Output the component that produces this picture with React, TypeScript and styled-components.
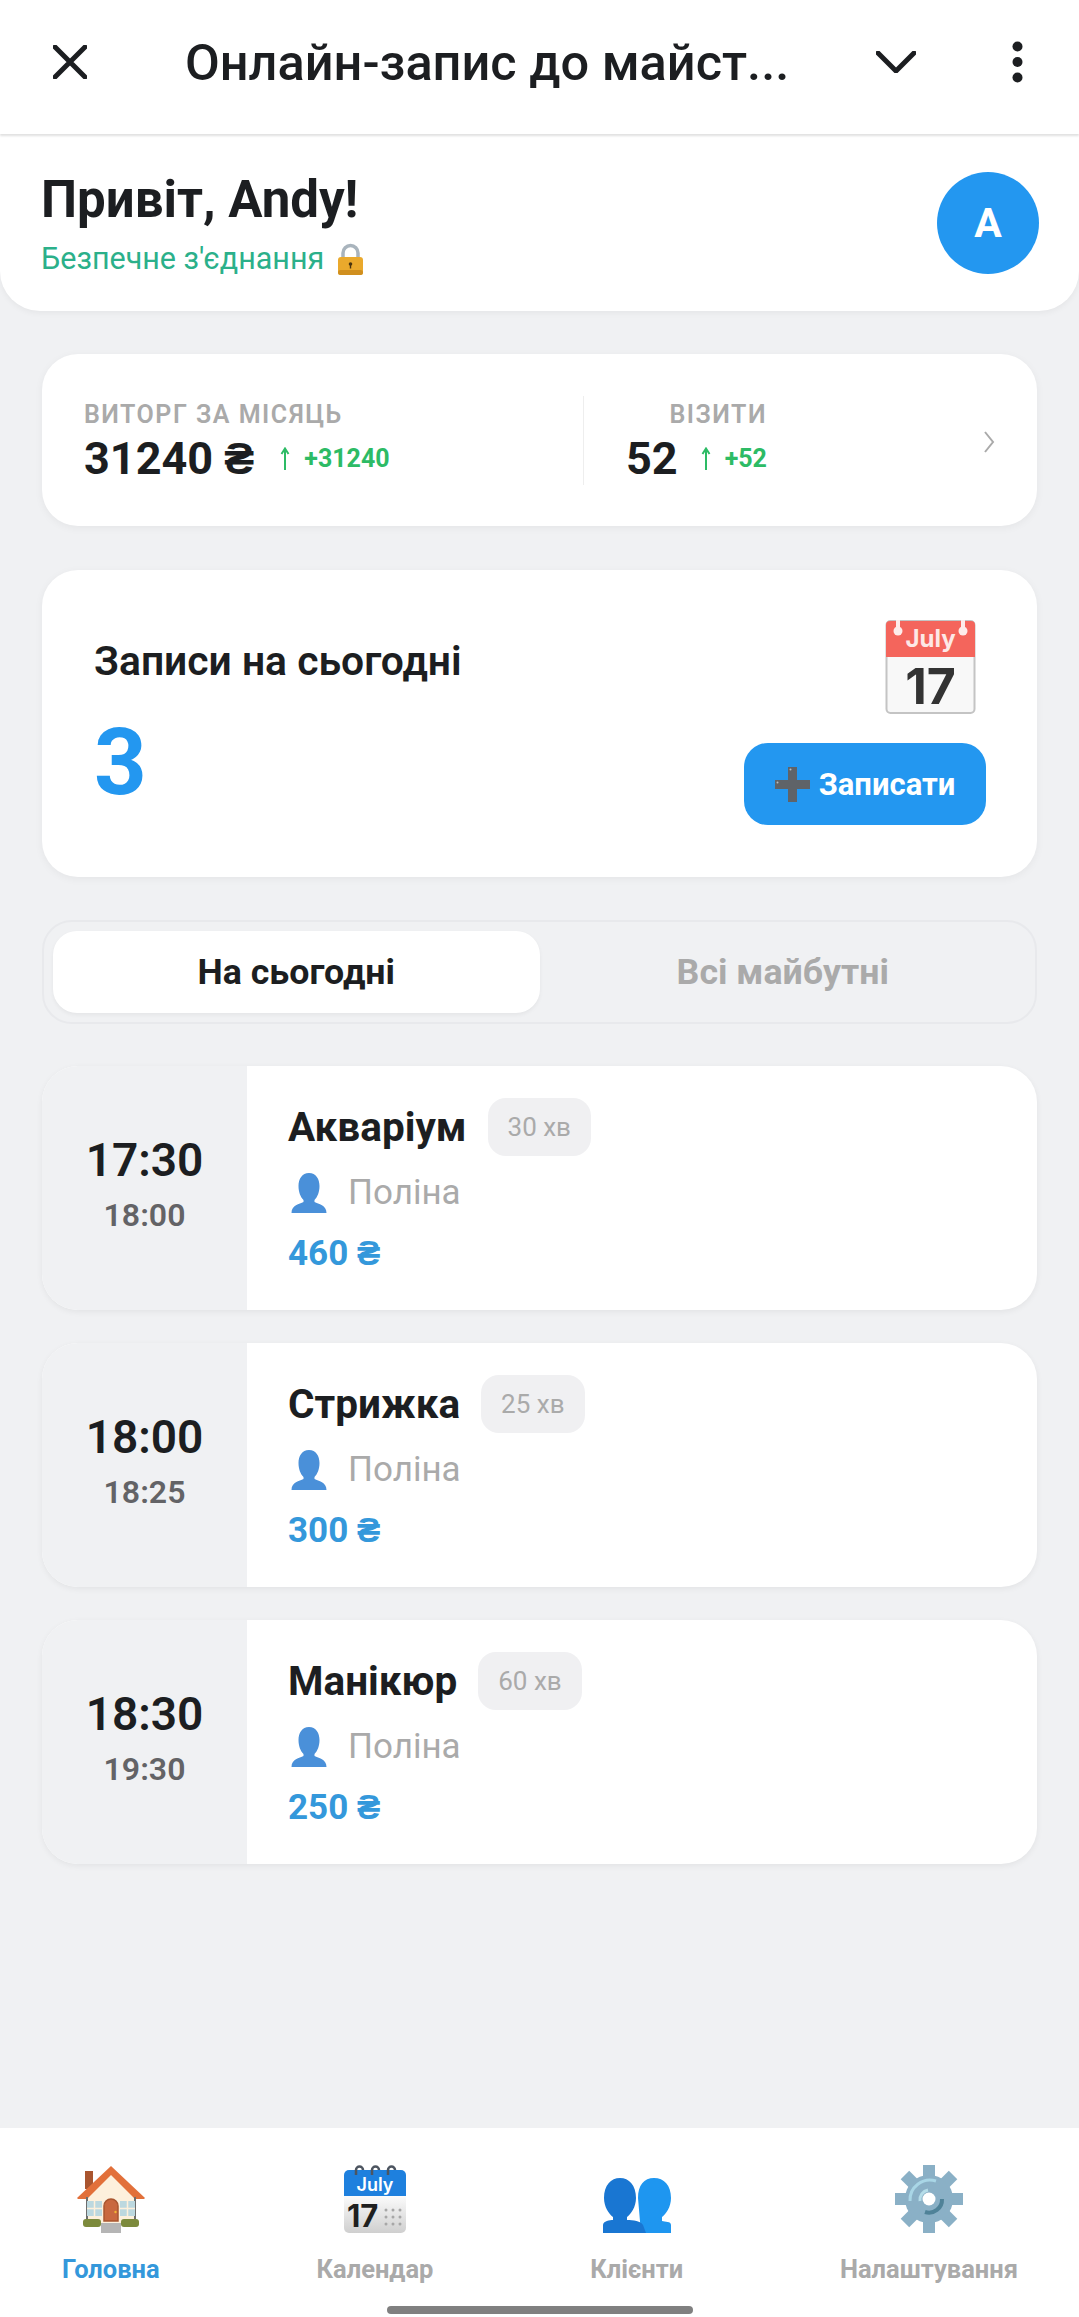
import React from "react";
import styled, { createGlobalStyle } from "styled-components";

const Global = createGlobalStyle`
  html, body { margin: 0; padding: 0; background: #f0f1f3; }
  body { font-family: Roboto, "Liberation Sans", sans-serif; color: #1c1e21; }
  * { box-sizing: border-box; }
`;

const Page = styled.div`
  width: 1079px;
  height: 2317px;
  display: flex;
  flex-direction: column;
  overflow: hidden;
  background: #f0f1f3;
`;

const TopBar = styled.div`
  height: 134px;
  flex: none;
  background: #fff;
  display: flex;
  align-items: center;
  padding: 0 0 10px 53px;
  box-shadow: 0 2px 2px rgba(0, 0, 0, 0.12);
  position: relative;
  z-index: 2;
`;
const Title = styled.div`
  margin-left: 98px;
  width: 691px;
  font-size: 50.5px;
  font-weight: 500;
  white-space: nowrap;
  color: #1c1e21;
`;
const BarIcon = styled.svg`
  flex: none;
  display: block;
`;
const Dots = styled.svg`
  flex: none;
  display: block;
  margin-left: 96px;
`;

const Header = styled.div`
  flex: none;
  height: 177px;
  background: #fff;
  border-radius: 0 0 40px 40px;
  box-shadow: 0 2px 6px rgba(0, 0, 0, 0.05);
  display: flex;
  align-items: center;
  justify-content: space-between;
  padding: 0 40px 0 41px;
`;
const Greeting = styled.div`
  padding-top: 3px;
`;
const Hello = styled.div`
  font-size: 51px;
  font-weight: 700;
  line-height: 60px;
`;
const Secure = styled.div`
  margin-top: 10px;
  display: flex;
  align-items: center;
  gap: 13px;
  font-size: 30.5px;
  line-height: 38px;
  color: #2bb08a;
`;
const Avatar = styled.div`
  width: 102px;
  height: 102px;
  border-radius: 50%;
  background: #2397f0;
  color: #fff;
  font-size: 41px;
  font-weight: 700;
  display: flex;
  align-items: center;
  justify-content: center;
`;

const Main = styled.div`
  flex: 1;
  padding: 43px 42px 0;
  display: flex;
  flex-direction: column;
`;

const StatsCard = styled.div`
  height: 172px;
  background: #fff;
  border-radius: 36px;
  box-shadow: 0 2px 8px rgba(0, 0, 0, 0.05);
  display: flex;
  align-items: center;
  padding: 7px 42px 0;
`;
const Stat = styled.div<{ $w?: number; $right?: boolean }>`
  width: ${(p) => (p.$w ? `${p.$w}px` : "auto")};
  display: flex;
  flex-direction: column;
  align-items: ${(p) => (p.$right ? "flex-end" : "flex-start")};
`;
const StatLabel = styled.div`
  font-size: 25px;
  line-height: 30px;
  font-weight: 600;
  letter-spacing: 1.5px;
  color: #aaaaaa;
`;
const StatRow = styled.div`
  display: flex;
  align-items: center;
`;
const StatValue = styled.div`
  font-size: 45px;
  line-height: 58px;
  font-weight: 700;
  color: #1c1e21;
`;
const Trend = styled.div<{ $gap: number }>`
  margin-left: ${(p) => p.$gap}px;
  display: flex;
  align-items: center;
  gap: 14px;
  font-size: 25px;
  font-weight: 700;
  color: #2dbb65;
`;
const Divider = styled.div`
  width: 1px;
  height: 89px;
  background: #eeeeee;
  margin: -7px 42px 0 42px;
`;
const Chevron = styled.svg`
  margin-left: auto;
  margin-top: -4px;
  flex: none;
`;

const TodayCard = styled.div`
  margin-top: 44px;
  height: 307px;
  background: #fff;
  border-radius: 36px;
  box-shadow: 0 2px 8px rgba(0, 0, 0, 0.05);
  display: flex;
  justify-content: space-between;
  padding: 50px 51px 52px 52px;
`;
const TodayLeft = styled.div`
  display: flex;
  flex-direction: column;
  justify-content: center;
  padding-top: 8px;
`;
const TodayTitle = styled.div`
  font-size: 40.8px;
  line-height: 46px;
  font-weight: 600;
`;
const TodayCount = styled.div`
  margin-top: 27px;
  font-size: 92px;
  line-height: 104px;
  font-weight: 700;
  color: #2397f0;
`;
const TodayRight = styled.div`
  display: flex;
  flex-direction: column;
  align-items: flex-end;
  justify-content: space-between;
`;
const CalWrap = styled.div`
  margin-right: 10px;
`;
const AddButton = styled.div`
  width: 242px;
  height: 82px;
  border-radius: 24px;
  background: #2397f0;
  color: #fff;
  font-size: 31px;
  font-weight: 700;
  display: flex;
  align-items: center;
  justify-content: center;
  gap: 9px;
`;

const Tabs = styled.div`
  margin-top: 43px;
  height: 104px;
  border: 2px solid #e8e9ec;
  border-radius: 30px;
  padding: 9px;
  display: flex;
`;
const Tab = styled.div<{ $active?: boolean }>`
  flex: 1;
  border-radius: 24px;
  background: ${(p) => (p.$active ? "#fff" : "transparent")};
  box-shadow: ${(p) => (p.$active ? "0 2px 4px rgba(0,0,0,0.05)" : "none")};
  color: ${(p) => (p.$active ? "#1c1e21" : "#aaaaaa")};
  font-size: 35.7px;
  font-weight: 700;
  display: flex;
  align-items: center;
  justify-content: center;
`;

const List = styled.div`
  margin-top: 42px;
  display: flex;
  flex-direction: column;
  gap: 33px;
`;
const Row = styled.div`
  height: 244px;
  border-radius: 36px;
  overflow: hidden;
  background: #fff;
  display: flex;
  box-shadow: 0 2px 6px rgba(0, 0, 0, 0.06);
`;
const TimeCol = styled.div`
  width: 205px;
  flex: none;
  background: #f0f1f3;
  display: flex;
  flex-direction: column;
  align-items: center;
  justify-content: center;
  padding-bottom: 9px;
`;
const TimeStart = styled.div`
  font-size: 46px;
  line-height: 54px;
  font-weight: 600;
`;
const TimeEnd = styled.div`
  margin-top: 8px;
  font-size: 32px;
  line-height: 40px;
  font-weight: 600;
  color: #636366;
`;
const Info = styled.div`
  flex: 1;
  padding: 32px 0 0 41px;
`;
const NameRow = styled.div`
  display: flex;
  align-items: center;
  gap: 21px;
`;
const Name = styled.div`
  font-size: 40.5px;
  line-height: 58px;
  font-weight: 700;
`;
const Badge = styled.div`
  height: 58px;
  padding: 0 20px;
  border-radius: 18px;
  background: #f0f0f2;
  color: #aaaaaa;
  font-size: 26px;
  display: flex;
  align-items: center;
`;
const Master = styled.div`
  margin-top: 13px;
  display: flex;
  align-items: center;
  gap: 21px;
  font-size: 35px;
  line-height: 48px;
  color: #aaaaaa;
  padding-left: 3px;
`;
const Price = styled.div`
  margin-top: 15px;
  font-size: 35px;
  line-height: 44px;
  font-weight: 700;
  color: #3498db;
`;

const Nav = styled.div`
  flex: none;
  height: 189px;
  background: #fff;
  padding: 37px 61px 0 62px;
  display: flex;
  justify-content: space-between;
  align-items: flex-start;
  position: relative;
`;
const NavItem = styled.div<{ $active?: boolean }>`
  display: flex;
  flex-direction: column;
  align-items: center;
  gap: 21px;
  color: ${(p) => (p.$active ? "#3498db" : "#aaaaaa")};
  font-size: 25.5px;
  line-height: 30px;
  font-weight: 700;
`;
const HomeIndicator = styled.div`
  position: absolute;
  left: 387px;
  bottom: 3px;
  width: 306px;
  height: 8px;
  border-radius: 4px;
  background: #808080;
`;

const Lock = () => (
  <svg width="27" height="33" viewBox="0 0 27 33">
    <path d="M6 16V10a7.500 7.500 0 0 1 15 0v6" fill="none" stroke="#a9b4bd" strokeWidth="3.500" />
    <rect x="1" y="14" width="25" height="18" rx="3" fill="#eaa92c" />
    <rect x="1" y="27" width="25" height="5" rx="2.500" fill="#d08f1f" />
    <circle cx="13.500" cy="21" r="1.800" fill="#4a3510" />
    <rect x="12.800" y="21" width="1.400" height="4.500" fill="#4a3510" />
  </svg>
);

const Person = () => (
  <svg width="36" height="40" viewBox="0 0 36 40">
    <path
      d="M18 0c7 0 10.500 6 10.500 13 0 6-2 11-5 14v2c4 2 12 3 12 11H0.500c0-8 8-9 12-11v-2c-3-3-5-8-5-14C7.500 6 11 0 18 0z"
      fill="#4a90d9"
    />
  </svg>
);

const Plus = () => (
  <svg width="35" height="35" viewBox="0 0 35 35">
    <path d="M13 0h9v13h13v9H22v13h-9V22H0v-9h13z" fill="#5f6368" />
    <circle cx="15.500" cy="2.500" r="1" fill="#b8bcc0" />
    <circle cx="2.500" cy="15.500" r="1" fill="#b8bcc0" />
  </svg>
);

const RedCalendar = () => (
  <svg width="91" height="94" viewBox="0 0 91 94">
    <rect x="1.500" y="1" width="88" height="92" rx="4" fill="#f8f8f8" stroke="#c4c4c4" strokeWidth="2" />
    <path d="M1 5a4 4 0 0 1 4-4h81a4 4 0 0 1 4 4v32H1z" fill="#f4655c" />
    <rect x="11" y="0" width="4" height="8" fill="#fdecea" />
    <rect x="76" y="0" width="4" height="8" fill="#fdecea" />
    <circle cx="13" cy="11" r="4.500" fill="#fdecea" />
    <circle cx="78" cy="11" r="4.500" fill="#fdecea" />
    <text x="45.500" y="27" textAnchor="middle" fontFamily="Inter, Roboto, sans-serif" fontSize="24" fontWeight="700" fill="#fde8e6">
      July
    </text>
    <text x="45.500" y="84" textAnchor="middle" fontFamily="Inter, Roboto, sans-serif" fontSize="50" fontWeight="700" fill="#333333">
      17
    </text>
  </svg>
);

const House = () => (
  <svg width="68" height="68" viewBox="0 0 68 68">
    <rect x="8" y="6" width="8" height="18" fill="#a9552f" />
    <path d="M10 31 34 7l24 24v28H10z" fill="#fdf0dc" />
    <path d="M0 33 34 1l34 32-1 1H58L34 10 10 34H1z" fill="#e2703a" />
    <rect x="9" y="32" width="2" height="26" fill="#6d6d6d" />
    <rect x="57" y="32" width="2" height="26" fill="#6d6d6d" />
    <rect x="10" y="36" width="15" height="15" fill="#bcd8df" />
    <rect x="43" y="36" width="15" height="15" fill="#bcd8df" />
    <path d="M17.500 36v15M10 43.500h15M50.500 36v15M43 43.500h15" stroke="#fdf0dc" strokeWidth="1.500" />
    <path d="M27 56V41a7 7 0 0 1 14 0v15z" fill="#c9683f" stroke="#a9552f" strokeWidth="1.500" />
    <circle cx="38.500" cy="47" r="1.200" fill="#f2b632" />
    <rect x="6" y="54" width="18" height="8" rx="3" fill="#7c8a3c" />
    <rect x="44" y="54" width="18" height="8" rx="3" fill="#7c8a3c" />
    <rect x="24" y="58" width="20" height="10" fill="#b5b5b5" />
  </svg>
);

const BlueCalendar = () => (
  <svg width="62" height="68" viewBox="0 0 62 68">
    <defs>
      <linearGradient id="calPage" x1="0" y1="0" x2="0" y2="1">
        <stop offset="0" stopColor="#fbfbfb" />
        <stop offset="1" stopColor="#cfcfcf" />
      </linearGradient>
    </defs>
    <path d="M0 31h62v32a5 5 0 0 1-5 5H5a5 5 0 0 1-5-5z" fill="url(#calPage)" />
    <path d="M0 10a5 5 0 0 1 5-5h52a5 5 0 0 1 5 5v21H0z" fill="#1e80de" />
    <g fill="none" stroke="#4d5560" strokeWidth="2.500">
      <path d="M12 10V5a3.500 3.500 0 0 1 7 0" />
      <path d="M28 10V5a3.500 3.500 0 0 1 7 0" />
      <path d="M44 10V5a3.500 3.500 0 0 1 7 0" />
    </g>
    <text x="31" y="26" textAnchor="middle" fontFamily="Inter, Roboto, sans-serif" fontSize="18" fontWeight="600" fill="#fff">
      July
    </text>
    <text x="3" y="62" fontFamily="Inter, Roboto, sans-serif" fontSize="31" fontWeight="700" fill="#1f1f1f">
      17
    </text>
    <g fill="#a7a7a7">
      {[42, 49, 56].map((x) =>
        [45, 52, 59].map((y) => <circle key={`${x}-${y}`} cx={x} cy={y} r="1.500" />)
      )}
    </g>
  </svg>
);

const People = () => (
  <svg width="68" height="68" viewBox="0 0 68 68">
    <path d="M35 33c0-13 6-20 16-20s17 7 17 20c0 9-5 16-9 19v4c3 1 9 0 9 4v8H38z" fill="#1e96f0" />
    <path d="M1 33c0-13 7-20 16-20s16 7 16 20c0 9-5 16-9 19v3c6 0 14 1 16 5l3 8H0v-8c0-4 7-5 10-5v-3C6 49 1 42 1 33z" fill="#1976d2" />
  </svg>
);

const Gear = () => (
  <svg width="68" height="68" viewBox="0 0 68 68">
    <g fill="#8ab0c6">
      {[0, 45, 90, 135].map((a) => (
        <rect key={a} x="28" y="0" width="12" height="68" transform={`rotate(${a} 34 34)`} />
      ))}
      <circle cx="34" cy="34" r="24" />
    </g>
    <path d="M15 36a20 20 0 0 1 26-20" fill="none" stroke="#a9d6e6" strokeWidth="3" />
    <path d="M25 36a10 10 0 0 1 8-11" fill="none" stroke="#b5dde9" strokeWidth="3" />
    <path d="M47 34a13 13 0 0 1-17 13" fill="none" stroke="#4f8298" strokeWidth="4" />
    <circle cx="34" cy="34" r="6.500" fill="#fff" />
  </svg>
);

const appointments = [
  { start: "17:30", end: "18:00", name: "Акваріум", dur: "30 хв", price: "460 ₴" },
  { start: "18:00", end: "18:25", name: "Стрижка", dur: "25 хв", price: "300 ₴" },
  { start: "18:30", end: "19:30", name: "Манікюр", dur: "60 хв", price: "250 ₴" },
];

const UpArrow = () => (
  <svg width="10" height="24" viewBox="0 0 10 24">
    <path d="M5 23V2M1.500 7 5 1.500 8.500 7" fill="none" stroke="#2dbb65" strokeWidth="2" />
  </svg>
);

export default function App() {
  return (
    <Page>
      <Global />
      <TopBar>
        <BarIcon width="34" height="34" viewBox="0 0 34 34">
          <path d="M2 2l30 30M32 2 2 32" stroke="#1c1e21" strokeWidth="5" strokeLinecap="round" />
        </BarIcon>
        <Title>Онлайн-запис до майст...</Title>
        <BarIcon width="40" height="22" viewBox="0 0 40 22">
          <path d="M2 2l18 18L38 2" fill="none" stroke="#1c1e21" strokeWidth="5" strokeLinecap="round" strokeLinejoin="round" />
        </BarIcon>
        <Dots width="11" height="42" viewBox="0 0 11 42">
          <circle cx="5.500" cy="5.500" r="5" fill="#1c1e21" />
          <circle cx="5.500" cy="21" r="5" fill="#1c1e21" />
          <circle cx="5.500" cy="36.500" r="5" fill="#1c1e21" />
        </Dots>
      </TopBar>
      <Header>
        <Greeting>
          <Hello>Привіт, Andy!</Hello>
          <Secure>
            Безпечне з'єднання <Lock />
          </Secure>
        </Greeting>
        <Avatar>A</Avatar>
      </Header>
      <Main>
        <StatsCard>
          <Stat $w={457}>
            <StatLabel>ВИТОРГ ЗА МІСЯЦЬ</StatLabel>
            <StatRow>
              <StatValue>31240 ₴</StatValue>
              <Trend $gap={26}>
                <UpArrow />
                +31240
              </Trend>
            </StatRow>
          </Stat>
          <Divider />
          <Stat $right>
            <StatLabel>ВІЗИТИ</StatLabel>
            <StatRow>
              <StatValue>52</StatValue>
              <Trend $gap={23}>
                <UpArrow />
                +52
              </Trend>
            </StatRow>
          </Stat>
          <Chevron width="12" height="22" viewBox="0 0 12 22">
            <path d="M2 1l8 10-8 10" fill="none" stroke="#aaaaaa" strokeWidth="2" />
          </Chevron>
        </StatsCard>

        <TodayCard>
          <TodayLeft>
            <TodayTitle>Записи на сьогодні</TodayTitle>
            <TodayCount>3</TodayCount>
          </TodayLeft>
          <TodayRight>
            <CalWrap>
              <RedCalendar />
            </CalWrap>
            <AddButton>
              <Plus />
              Записати
            </AddButton>
          </TodayRight>
        </TodayCard>

        <Tabs>
          <Tab $active>На сьогодні</Tab>
          <Tab>Всі майбутні</Tab>
        </Tabs>

        <List>
          {appointments.map((a) => (
            <Row key={a.start}>
              <TimeCol>
                <TimeStart>{a.start}</TimeStart>
                <TimeEnd>{a.end}</TimeEnd>
              </TimeCol>
              <Info>
                <NameRow>
                  <Name>{a.name}</Name>
                  <Badge>{a.dur}</Badge>
                </NameRow>
                <Master>
                  <Person />
                  Поліна
                </Master>
                <Price>{a.price}</Price>
              </Info>
            </Row>
          ))}
        </List>
      </Main>
      <Nav>
        <NavItem $active>
          <House />
          Головна
        </NavItem>
        <NavItem>
          <BlueCalendar />
          Календар
        </NavItem>
        <NavItem>
          <People />
          Клієнти
        </NavItem>
        <NavItem>
          <Gear />
          Налаштування
        </NavItem>
        <HomeIndicator />
      </Nav>
    </Page>
  );
}
